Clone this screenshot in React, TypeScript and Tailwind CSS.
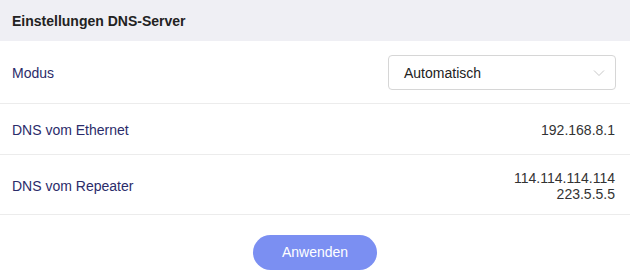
import React from "react";

export default function App() {
  return (
    <div className="w-[630px] h-[273px] bg-white font-['Liberation_Sans',Arial,sans-serif] text-[14px] overflow-hidden">
      <div className="h-[41px] bg-[#efeff4] flex items-center px-[12px]">
        <span className="font-bold text-[14px] text-[#222] mt-[1px]">Einstellungen DNS-Server</span>
      </div>
      <div className="h-[63px] flex items-center justify-between pl-[12px] pr-[14px] border-b border-[#ececec]">
        <span className="text-[#2b2c6a] mt-[3px]">Modus</span>
        <div className="w-[228px] h-[35px] border border-[#d6d6d6] rounded-[4px] flex items-center justify-between pl-[15px] pr-[10px] text-[#222] mt-[1px]">
          <span className="mt-[1px]">Automatisch</span>
          <svg width="12" height="8" viewBox="0 0 12 8" fill="none">
            <path d="M1 1.5 L6 6.5 L11 1.5" stroke="#c8c8c8" strokeWidth="1" />
          </svg>
        </div>
      </div>
      <div className="h-[51px] flex items-center justify-between pl-[12px] pr-[15px] border-b border-[#ececec]">
        <span className="text-[#2b2c6a] mt-[3px]">DNS vom Ethernet</span>
        <span className="text-[#333] mt-[3px]">192.168.8.1</span>
      </div>
      <div className="h-[60px] flex items-center justify-between pl-[12px] pr-[15px] border-b border-[#ececec]">
        <span className="text-[#2b2c6a] mt-[3px]">DNS vom Repeater</span>
        <div className="flex flex-col items-end leading-[16px] text-[#333] mt-[3px]">
          <span>114.114.114.114</span>
          <span>223.5.5.5</span>
        </div>
      </div>
      <div className="flex justify-center pt-[20px]">
        <button className="w-[124px] h-[35px] rounded-full bg-[#7b8ff2] text-white text-[14px]">
          Anwenden
        </button>
      </div>
    </div>
  );
}
